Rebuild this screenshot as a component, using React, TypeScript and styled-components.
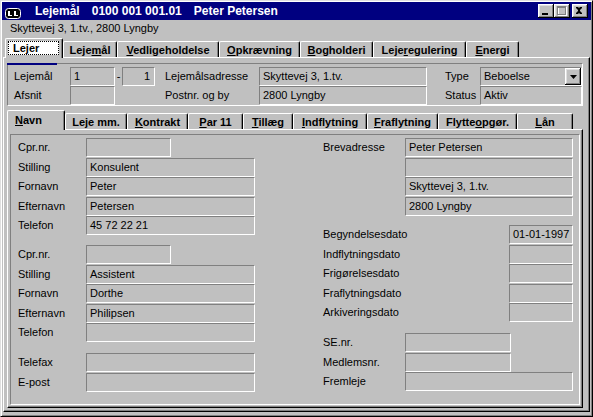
import React from 'react';
import styled, { createGlobalStyle } from 'styled-components';

const Global = createGlobalStyle`
  html, body { margin: 0; padding: 0; background: #c0c0c0; }
  body { font-family: "Liberation Sans", Arial, sans-serif; font-size: 11px; color: #000; }
  * { box-sizing: border-box; }
  u { text-decoration: underline; text-underline-offset: 1px; }
`;

const Window = styled.div`
  width: 593px;
  height: 417px;
  background: #c0c0c0;
  border: 1px solid;
  border-color: #dfdfdf #000 #000 #dfdfdf;
  box-shadow: inset 1px 1px #fff, inset -1px -1px #808080;
  padding: 1px;
  display: flex;
  flex-direction: column;
`;

const TitleBar = styled.div`
  height: 18px;
  flex: none;
  background: #000080;
  color: #fff;
  display: flex;
  align-items: center;
  padding: 0 3px;
`;

const TitleText = styled.div`
  flex: 1;
  display: flex;
  gap: 12px;
  margin-left: 14px;
  font-weight: bold;
  font-size: 12px;
  white-space: pre;
`;

const CapButtons = styled.div`
  display: flex;
  align-items: center;
`;

const CapButton = styled.div<{ $gap?: number }>`
  width: 16px;
  height: 14px;
  margin-left: ${p => p.$gap || 0}px;
  background: #c0c0c0;
  box-shadow: inset -1px -1px #000, inset 1px 1px #fff, inset -2px -2px #808080, inset 2px 2px #dfdfdf;
  display: flex;
  svg { display: block; }
`;

const SubTitle = styled.div`
  height: 17px;
  flex: none;
  line-height: 17px;
  padding-left: 8px;
`;

const TabStrip = styled.div<{ $h: number; $mt?: number; $pl?: number }>`
  position: relative;
  z-index: 1;
  flex: none;
  height: ${p => p.$h}px;
  margin-top: ${p => p.$mt || 0}px;
  margin-bottom: -1px;
  padding-left: ${p => p.$pl || 0}px;
  display: flex;
  align-items: flex-end;
`;

const Tab = styled.div<{ $w: number; $active?: boolean }>`
  position: relative;
  width: ${p => p.$w}px;
  height: ${p => (p.$active ? 20 : 16)}px;
  margin-bottom: ${p => (p.$active ? 0 : 1)}px;
  border-top: 1px solid #fff;
  border-left: 1px solid #fff;
  border-right: 1px solid #000;
  border-radius: 2px 2px 0 0;
  box-shadow: inset -1px 0 #808080;
  background: #c0c0c0;
  font-weight: bold;
  white-space: nowrap;
  display: flex;
  align-items: center;
  justify-content: ${p => (p.$active ? 'flex-start' : 'center')};
  padding-left: ${p => (p.$active ? 7 : 0)}px;
  padding-bottom: ${p => (p.$active ? 2 : 0)}px;
`;

const FocusBox = styled.div`
  position: absolute;
  left: 2px;
  right: 3px;
  top: 2px;
  bottom: 3px;
  background: #fff;
  border: 1px dotted #000;
`;

const TabLabel = styled.span`
  position: relative;
`;

const Panel = styled.div<{ $pad: string; $m?: string }>`
  flex: 1;
  min-height: 0;
  margin: ${p => p.$m || '0'};
  border: 1px solid;
  border-color: #fff #000 #000 #fff;
  box-shadow: inset -1px -1px #808080;
  padding: ${p => p.$pad};
  display: flex;
  flex-direction: column;
`;

const HeaderBox = styled.div`
  position: relative;
  flex: none;
  width: 576px;
  height: 43px;
  border: 1px solid;
  border-color: #808080 #fff #fff #808080;
  padding: 3px 0 0 6px;
  &::before {
    content: '';
    position: absolute;
    left: -1px;
    top: 0;
    width: 50px;
    height: 1px;
    background: #000080;
    box-shadow: 0 -1px #000080;
  }
`;

const HeaderGrid = styled.div`
  display: grid;
  grid-template-columns: 56px 45px 7px 33px 10px 94px 168px 18px 35px 102px;
  grid-template-rows: 19px 19px;
`;

const Label = styled.div<{ $w?: number }>`
  ${p => (p.$w ? `width: ${p.$w}px;` : '')}
  flex: none;
  height: 19px;
  line-height: 19px;
  white-space: nowrap;
`;

const Dash = styled.div`
  text-align: center;
  line-height: 18px;
`;

const Field = styled.div<{ $w?: number; $right?: boolean }>`
  width: ${p => (p.$w ? `${p.$w}px` : '100%')};
  flex: none;
  height: 19px;
  border: 1px solid;
  border-color: #808080 #fff #fff #808080;
  padding: 0 ${p => (p.$right ? 4 : 3)}px 0 3px;
  line-height: 17px;
  white-space: nowrap;
  overflow: hidden;
  text-align: ${p => (p.$right ? 'right' : 'left')};
`;

const Combo = styled(Field)`
  display: flex;
  align-items: center;
  justify-content: space-between;
  padding-right: 0;
`;

const ComboButton = styled.div`
  width: 16px;
  height: 17px;
  background: #c0c0c0;
  box-shadow: inset -1px -1px #000, inset 1px 1px #fff, inset -2px -2px #808080, inset 2px 2px #dfdfdf;
  display: flex;
  align-items: center;
  justify-content: center;
`;

const Body = styled.div`
  flex: 1;
  border: 1px solid;
  border-color: #808080 #fff #fff #808080;
  padding: 3px 0 0 7px;
  display: grid;
  grid-template-columns: 305px 250px;
  align-content: start;
`;

const Column = styled.div`
  display: flex;
  flex-direction: column;
`;

const Row = styled.div<{ $mt?: number }>`
  display: flex;
  align-items: flex-start;
  height: 19.5px;
  margin-top: ${p => p.$mt || 0}px;
`;

const WinIcon = () => (
  <svg width="16" height="16" viewBox="0 0 16 16" style={{ display: 'block' }}>
    <rect x="0.5" y="5.5" width="15" height="10" rx="3" fill="#000" stroke="#fff" />
    <rect x="3" y="8" width="2" height="5" fill="#fff" />
    <rect x="4" y="12" width="3" height="1" fill="#fff" />
    <rect x="9" y="8" width="2" height="5" fill="#fff" />
    <rect x="10" y="12" width="3" height="1" fill="#fff" />
  </svg>
);

const MinGlyph = () => (
  <svg width="16" height="14">
    <rect x="4" y="9" width="6" height="2" fill="#000" />
  </svg>
);

const MaxGlyph = () => (
  <svg width="16" height="14">
    <g transform="translate(1,1)" fill="none" stroke="#fff">
      <rect x="3.5" y="2.5" width="8" height="8" />
    </g>
    <g fill="none" stroke="#808080">
      <rect x="3.5" y="2.5" width="8" height="8" />
      <line x1="3" y1="3.5" x2="12" y2="3.5" />
    </g>
  </svg>
);

const CloseGlyph = () => (
  <svg width="16" height="14">
    <path d="M4 3h2l1 1h0l1-1h2v1l-2 2v1l2 2v1h-2l-1-1-1 1h-2v-1l2-2v-1l-2-2z" fill="#000" />
  </svg>
);

const ArrowGlyph = () => (
  <svg width="7" height="4" style={{ display: 'block' }}>
    <path d="M0 0h7L3.5 4z" fill="#000" />
  </svg>
);

const tabs1: { w: number; label: React.ReactNode; active?: boolean }[] = [
  { w: 58, label: 'Lejer', active: true },
  { w: 54, label: <>Leje<u>m</u>ål</> },
  { w: 102, label: <><u>V</u>edligeholdelse</> },
  { w: 81, label: <><u>O</u>pkrævning</> },
  { w: 73, label: <><u>B</u>ogholderi</> },
  { w: 93, label: <>Leje<u>r</u>egulering</> },
  { w: 53, label: <><u>E</u>nergi</> },
];

const tabs2: { w: number; label: React.ReactNode; active?: boolean }[] = [
  { w: 58, label: <><u>N</u>avn</>, active: true },
  { w: 62, label: 'Leje mm.' },
  { w: 61, label: <><u>K</u>ontrakt</> },
  { w: 55, label: <><u>P</u>ar 11</> },
  { w: 50, label: <><u>T</u>illæg</> },
  { w: 74, label: <><u>I</u>ndflytning</> },
  { w: 71, label: <><u>F</u>raflytning</> },
  { w: 79, label: <>Flytte<u>o</u>pgør.</> },
  { w: 56, label: <><u>L</u>ån</> },
];

export default function App() {
  return (
    <>
      <Global />
      <Window>
        <TitleBar>
          <WinIcon />
          <TitleText>
            <span>Lejemål</span>
            <span>0100 001 001.01</span>
            <span>Peter Petersen</span>
          </TitleText>
          <CapButtons>
            <CapButton><MinGlyph /></CapButton>
            <CapButton><MaxGlyph /></CapButton>
            <CapButton $gap={2}><CloseGlyph /></CapButton>
          </CapButtons>
        </TitleBar>
        <SubTitle>Skyttevej 3, 1.tv., 2800 Lyngby</SubTitle>

        <TabStrip $h={21} $pl={3}>
          {tabs1.map((t, i) => (
            <Tab key={i} $w={t.w} $active={t.active}>
              {t.active && <FocusBox />}
              <TabLabel>{t.label}</TabLabel>
            </Tab>
          ))}
        </TabStrip>

        <Panel $pad="5px 6px 3px 3px" $m="0 1px 3px 1px">
          <HeaderBox>
            <HeaderGrid>
              <Label>Lejemål</Label>
              <Field>1</Field>
              <Dash>-</Dash>
              <Field $right>1</Field>
              <span />
              <Label>Lejemålsadresse</Label>
              <Field>Skyttevej 3, 1.tv.</Field>
              <span />
              <Label>Type</Label>
              <Combo>
                <span>Beboelse</span>
                <ComboButton><ArrowGlyph /></ComboButton>
              </Combo>

              <Label>Afsnit</Label>
              <Field />
              <span />
              <span />
              <span />
              <Label>Postnr. og by</Label>
              <Field>2800 Lyngby</Field>
              <span />
              <Label>Status</Label>
              <Field>Aktiv</Field>
            </HeaderGrid>
          </HeaderBox>

          <TabStrip $h={23} $mt={1}>
            {tabs2.map((t, i) => (
              <Tab key={i} $w={t.w} $active={t.active}>
                <TabLabel>{t.label}</TabLabel>
              </Tab>
            ))}
          </TabStrip>

          <Panel $pad="4px 2px 2px 2px" $m="0 0 0 0">
            <Body>
              <Column>
                <Row><Label $w={68}>Cpr.nr.</Label><Field $w={85} /></Row>
                <Row><Label $w={68}>Stilling</Label><Field $w={169}>Konsulent</Field></Row>
                <Row><Label $w={68}>Fornavn</Label><Field $w={169}>Peter</Field></Row>
                <Row><Label $w={68}>Efternavn</Label><Field $w={169}>Petersen</Field></Row>
                <Row><Label $w={68}>Telefon</Label><Field $w={169}>45 72 22 21</Field></Row>

                <Row $mt={9.5}><Label $w={68}>Cpr.nr.</Label><Field $w={85} /></Row>
                <Row><Label $w={68}>Stilling</Label><Field $w={169}>Assistent</Field></Row>
                <Row><Label $w={68}>Fornavn</Label><Field $w={169}>Dorthe</Field></Row>
                <Row><Label $w={68}>Efternavn</Label><Field $w={169}>Philipsen</Field></Row>
                <Row><Label $w={68}>Telefon</Label><Field $w={169} /></Row>

                <Row $mt={10.5}><Label $w={68}>Telefax</Label><Field $w={169} /></Row>
                <Row><Label $w={68}>E-post</Label><Field $w={169} /></Row>
              </Column>

              <Column>
                <Row><Label $w={82}>Brevadresse</Label><Field $w={168}>Peter Petersen</Field></Row>
                <Row><Label $w={82} /><Field $w={168} /></Row>
                <Row><Label $w={82} /><Field $w={168}>Skyttevej 3, 1.tv.</Field></Row>
                <Row><Label $w={82} /><Field $w={168}>2800 Lyngby</Field></Row>

                <Row $mt={9}><Label $w={186}>Begyndelsesdato</Label><Field $w={64}>01-01-1997</Field></Row>
                <Row><Label $w={186}>Indflytningsdato</Label><Field $w={64} /></Row>
                <Row><Label $w={186}>Frigørelsesdato</Label><Field $w={64} /></Row>
                <Row><Label $w={186}>Fraflytningsdato</Label><Field $w={64} /></Row>
                <Row><Label $w={186}>Arkiveringsdato</Label><Field $w={64} /></Row>

                <Row $mt={10.5}><Label $w={82}>SE.nr.</Label><Field $w={106} /></Row>
                <Row><Label $w={82}>Medlemsnr.</Label><Field $w={106} /></Row>
                <Row><Label $w={82}>Fremleje</Label><Field $w={168} /></Row>
              </Column>
            </Body>
          </Panel>
        </Panel>
      </Window>
    </>
  );
}
